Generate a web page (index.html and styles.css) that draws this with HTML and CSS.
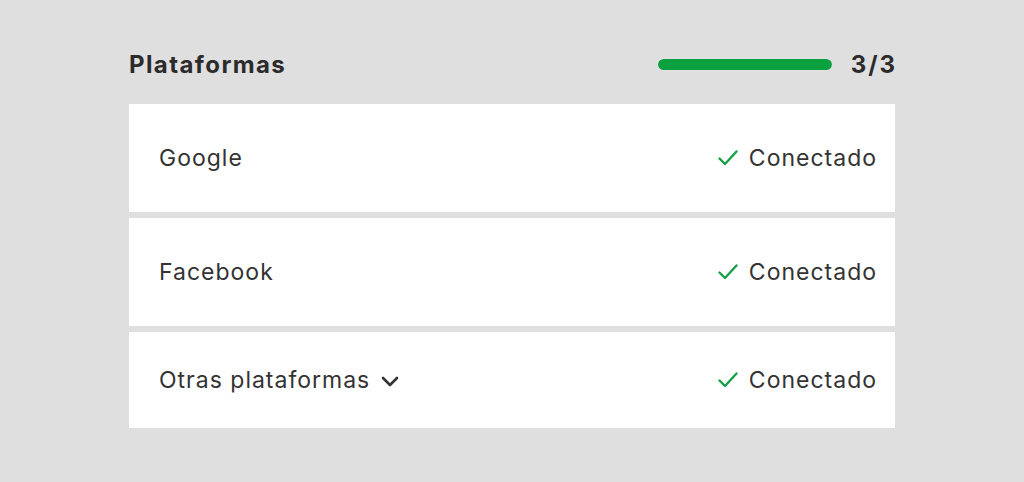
FILE: index.html
```html
<!DOCTYPE html>
<html lang="es">
<head>
<meta charset="utf-8">
<link rel="stylesheet" href="styles.css">
</head>
<body>
<main class="panel">
  <header class="head">
    <h2 class="title">Plataformas</h2>
    <div class="progress">
      <div class="bar"><div class="fill" style="width:100%"></div></div>
      <span class="count">3/3</span>
    </div>
  </header>
  <ul class="list">
    <li class="row">
      <span class="name">Google</span>
      <span class="status"><svg class="check" viewBox="0 0 20 16" width="20" height="16"><path d="M1.5 8.5 L7 14 L18.5 1.5" fill="none" stroke="#16a048" stroke-width="2.4" stroke-linecap="round" stroke-linejoin="round"/></svg><span class="label">Conectado</span></span>
    </li>
    <li class="row">
      <span class="name">Facebook</span>
      <span class="status"><svg class="check" viewBox="0 0 20 16" width="20" height="16"><path d="M1.5 8.5 L7 14 L18.5 1.5" fill="none" stroke="#16a048" stroke-width="2.4" stroke-linecap="round" stroke-linejoin="round"/></svg><span class="label">Conectado</span></span>
    </li>
    <li class="row short">
      <span class="name"><span class="label">Otras plataformas</span><svg class="chev" viewBox="0 0 18 11" width="18" height="11"><path d="M2 2 L9 9 L16 2" fill="none" stroke="#333" stroke-width="2.6" stroke-linecap="round" stroke-linejoin="round"/></svg></span>
      <span class="status"><svg class="check" viewBox="0 0 20 16" width="20" height="16"><path d="M1.5 8.5 L7 14 L18.5 1.5" fill="none" stroke="#16a048" stroke-width="2.4" stroke-linecap="round" stroke-linejoin="round"/></svg><span class="label">Conectado</span></span>
    </li>
  </ul>
</main>
</body>
</html>
```

FILE: styles.css
```css
html, body {
  margin: 0;
  padding: 0;
  background: #dfdfdf;
}
body {
  font-family: "Inter", "Noto Sans", sans-serif;
  color: #333;
  height: 482px;
}
.panel {
  width: 766px;
  margin: 0 auto 0 129px;
  padding-top: 47px;
}
.head {
  display: flex;
  justify-content: space-between;
  align-items: center;
  height: 34px;
  margin-bottom: 23px;
}
.title {
  margin: 0;
  font-size: 24px;
  font-weight: 700;
  color: #2b2b2b;
  letter-spacing: 1.4px;
}
.progress {
  display: flex;
  align-items: center;
  gap: 19px;
}
.bar {
  width: 174px;
  height: 11px;
  border-radius: 6px;
  background: #cfcfcf;
  overflow: hidden;
}
.fill {
  height: 100%;
  background: #0aa13e;
  border-radius: 6px;
}
.count {
  font-size: 24px;
  font-weight: 700;
  color: #2b2b2b;
  letter-spacing: 2px;
  margin-right: -2px;
}
.list {
  list-style: none;
  margin: 0;
  padding: 0;
  display: flex;
  flex-direction: column;
  gap: 6px;
}
.row {
  background: #fff;
  height: 108px;
  display: flex;
  align-items: center;
  justify-content: space-between;
  padding: 0 19px 0 30px;
  font-size: 23px;
  letter-spacing: 1px;
  color: #333;
}
.row.short {
  height: 96px;
}
.label {
  margin-right: -1px;
}
.name {
  display: flex;
  align-items: center;
  gap: 12px;
}
.chev {
  margin-top: 2px;
}
.status {
  display: flex;
  align-items: center;
  gap: 11px;
}
```
